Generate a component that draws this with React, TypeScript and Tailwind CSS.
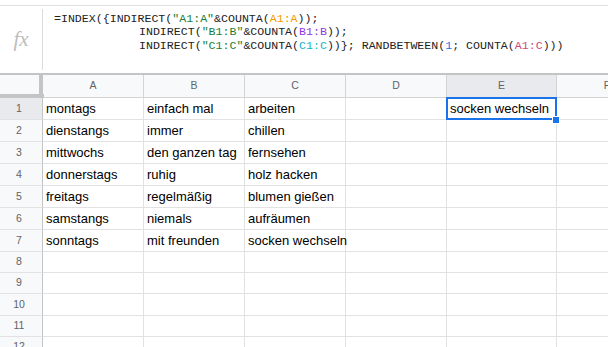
const cols = [
  { key: "A", w: "w-[101px]" },
  { key: "B", w: "w-[101px]" },
  { key: "C", w: "w-[101px]" },
  { key: "D", w: "w-[101px]" },
  { key: "E", w: "w-[110px]" },
  { key: "F", w: "w-[101px]" },
];

const data: string[][] = [
  ["montags", "einfach mal", "arbeiten"],
  ["dienstangs", "immer", "chillen"],
  ["mittwochs", "den ganzen tag", "fernsehen"],
  ["donnerstags", "ruhig", "holz hacken"],
  ["freitags", "regelmäßig", "blumen gießen"],
  ["samstangs", "niemals", "aufräumen"],
  ["sonntags", "mit freunden", "socken wechseln"],
];

const rowHeights = [
  "h-[22px]", "h-[22px]", "h-[22px]", "h-[22px]", "h-[22px]", "h-[22px]",
  "h-[22px]", "h-[21px]", "h-[21px]", "h-[22px]", "h-[21px]", "h-[21px]",
];

function FormulaBar() {
  return (
    <div className="flex h-[68px] border-t border-[#e0e0e0]">
      <div className="flex w-[44px] shrink-0 items-center py-[3px]">
        <div className="flex h-full w-[43px] items-center justify-center border-r border-[#dadce0]">
          <span className="font-['Liberation_Serif',serif] text-[21px] italic leading-none text-[#bdbdbd]">
            fx
          </span>
        </div>
      </div>
      <div className="pl-[10px] pt-[6px] font-['Liberation_Mono',monospace] text-[11.6px] leading-[13.4px] text-[#222] whitespace-pre">
        <div>
          =INDEX({"{"}INDIRECT(<span className="text-[#188038]">"A1:A"</span>&COUNTA(
          <span className="text-[#f29900]">A1:A</span>));
        </div>
        <div className="pl-[85px]">
          INDIRECT(<span className="text-[#188038]">"B1:B"</span>&COUNTA(
          <span className="text-[#9334e6]">B1:B</span>));
        </div>
        <div className="pl-[85px]">
          INDIRECT(<span className="text-[#188038]">"C1:C"</span>&COUNTA(
          <span className="text-[#12b5cb]">C1:C</span>)){"}"}; RANDBETWEEN(
          <span className="text-[#1a73e8]">1</span>; COUNTA(
          <span className="text-[#d0477a]">A1:C</span>)))
        </div>
      </div>
    </div>
  );
}

function Grid() {
  return (
    <div className="border-t-2 border-[#c4c4c4]">
      <div className="flex h-[23px]">
        <div className="relative w-[43px] shrink-0 border-r border-[#c4c4c4] bg-[#f8f9fa]">
          <div className="absolute right-[-1px] top-0 h-full w-[4px] bg-[#c4c4c4]" />
          <div className="absolute bottom-0 left-0 h-[4px] w-[44px] bg-[#c4c4c4]" />
        </div>
        {cols.map((c) => (
          <div
            key={c.key}
            className={`${c.w} flex shrink-0 items-center justify-center border-r border-b border-[#d3d3d3] font-['Liberation_Sans',Arial,sans-serif] text-[10.5px] text-[#5f6368] ${
              c.key === "E" ? "bg-[#e8eaed]" : "bg-[#f8f9fa]"
            }`}
          >
            {c.key}
          </div>
        ))}
      </div>
      {rowHeights.map((h, r) => (
        <div key={r} className={`flex ${h}`}>
          <div
            className={`flex w-[43px] shrink-0 items-center justify-center border-r border-b border-r-[#c4c4c4] border-b-[#e2e2e2] pr-[4px] font-['Liberation_Sans',Arial,sans-serif] text-[10.5px] text-[#5f6368] ${
              r === 0 ? "bg-[#e8eaed]" : "bg-[#f8f9fa]"
            }`}
          >
            {r + 1}
          </div>
          {cols.map((c, ci) => {
            const text = data[r]?.[ci] ?? (r === 0 && c.key === "E" ? "socken wechseln" : "");
            const selected = r === 0 && c.key === "E";
            return (
              <div
                key={c.key}
                className={`${c.w} relative shrink-0 overflow-visible whitespace-nowrap border-r border-b border-[#e2e2e2] pl-[3px] pt-[3px] font-['Liberation_Sans',Arial,sans-serif] text-[13px] leading-[16px] text-black ${
                  selected ? "z-10" : ""
                }`}
              >
                {text}
                {selected && (
                  <>
                    <div className="absolute -left-[1px] -top-[1px] h-[23px] w-[111px] border-2 border-[#1a73e8]" />
                    <div className="absolute -bottom-[5px] -right-[4px] h-[8px] w-[8px] border border-white bg-[#1a73e8]" />
                  </>
                )}
              </div>
            );
          })}
        </div>
      ))}
    </div>
  );
}

export default function App() {
  return (
    <div className="h-[347px] w-[608px] overflow-hidden bg-white pt-[5px]">
      <FormulaBar />
      <Grid />
    </div>
  );
}
